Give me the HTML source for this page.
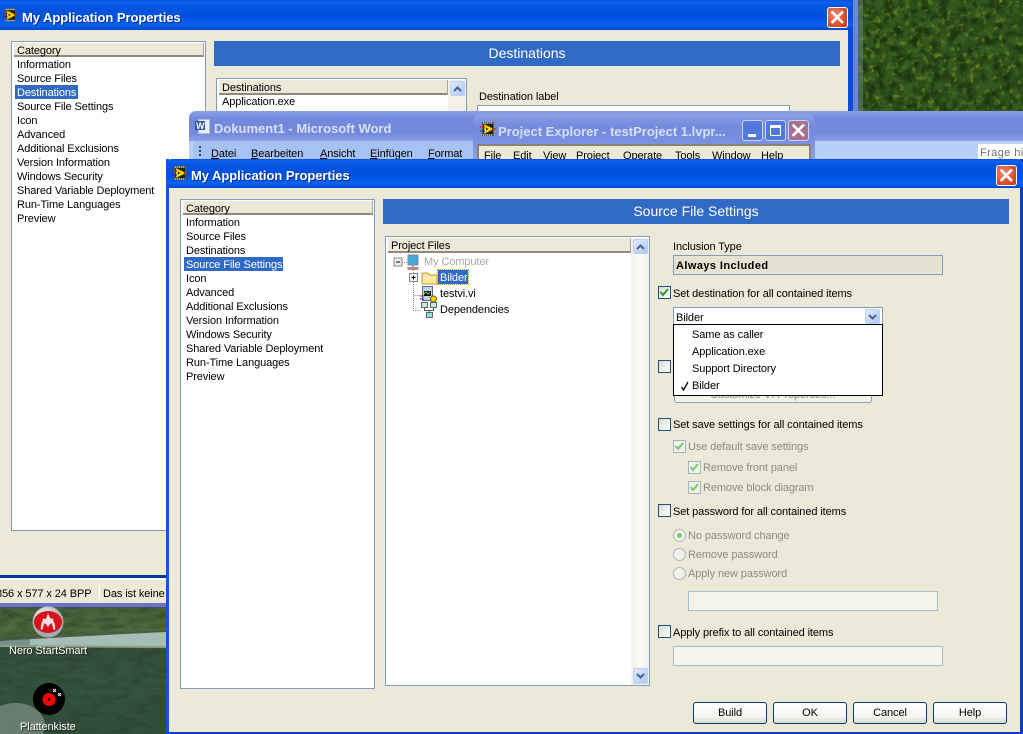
<!DOCTYPE html>
<html><head><meta charset="utf-8"><title>My Application Properties</title>
<style>
html,body{margin:0;padding:0}
body{width:1023px;height:734px;position:relative;overflow:hidden;background:#3b5a2c;font-family:"Liberation Sans",sans-serif;font-size:11px;color:#000}
div,span,svg{position:absolute;box-sizing:border-box}
.t{white-space:nowrap;line-height:14px;height:14px;letter-spacing:-.1px;margin-top:1px}
.g{color:#8c8c80}
.title{background:linear-gradient(#0a50d8 0,#0a62ee 8%,#0255e0 20%,#0050e0 55%,#0a62f0 85%,#0048c8 100%)}
.ttl{font-weight:bold;font-size:13px;color:#fff;white-space:nowrap;line-height:16px;text-shadow:1px 1px 0 #0a2f9a;letter-spacing:-.05px;margin-top:1px}
.ina{font-weight:bold;font-size:13px;color:#d5e0f6;white-space:nowrap;line-height:16px;letter-spacing:0;margin-top:1px}
.band{background:#316ac5;color:#fff;text-align:center;font-size:14px;line-height:25px;height:25px}
.box{background:#fff;border:1px solid #7f9db9}
.hd{background:#ece9d8;border-bottom:2px solid #8f8b7a;border-right:1px solid #aca899;height:15px;line-height:17px;padding-left:3px;letter-spacing:-.1px}
.x{border:1px solid #fff;border-radius:3px;background:radial-gradient(circle at 35% 35%,#e98a70,#d8512e 60%,#c23a1c);width:21px;height:21px}
.cb{width:13px;height:13px;border:1px solid #1c5180;background:linear-gradient(135deg,#dcdcd4,#fff)}
.cg{width:13px;height:13px;border:1px solid #a3b5bd;background:#f3f2ea}
.r{width:13px;height:13px;border:1px solid #a9b7bd;border-radius:50%;background:#f3f2ea}
.btn{width:74px;height:22px;top:702px;border:1px solid #003c74;border-radius:3px;background:linear-gradient(#fff,#f4f3ee 70%,#dcd8c8);text-align:center;line-height:20px;letter-spacing:-.1px}
.sb{background:linear-gradient(135deg,#e1eafe,#aec8f7);border:1px solid #bcd0f5;border-radius:2px}
.in{background:#f5f4ec;border:1px solid #a9bcc9}
u{text-decoration:underline}
</style></head><body>
<svg width="0" height="0" style="left:0;top:0"><defs>
<symbol id="lv" viewBox="0 0 16 14"><rect x="2" y="0" width="12" height="14" fill="#5f5f50"/><rect x="3" y="2" width="10" height="10" fill="#20201a"/><path d="M3 1h1M5 1h1M7 1h1M9 1h1M11 1h1M3 13h1M5 13h1M7 13h1M9 13h1M11 13h1" stroke="#e8e8e0" stroke-width="1"/><path d="M4 2 L14 7 L4 12Z" fill="#f2d800" stroke="#7a6c00" stroke-width=".5"/><path d="M0 5h5" stroke="#e01010"/><path d="M0 9h5" stroke="#1020d0"/><path d="M12 7h4" stroke="#e01010"/><path d="M6 5.500v3l2.200-1.500z" fill="#222"/></symbol>
<symbol id="xx" viewBox="0 0 21 21"><path d="M5.500 5.500 L15 15 M15 5.500 L5.500 15" stroke="#fff" stroke-width="2.600" stroke-linecap="square"/></symbol>
<symbol id="ck" viewBox="0 0 13 13"><path d="M2.500 6 L5 9 L10 3" fill="none" stroke="#21a121" stroke-width="2"/></symbol>
<symbol id="ckg" viewBox="0 0 13 13"><path d="M2.500 6 L5 9 L10 3" fill="none" stroke="#74c874" stroke-width="2"/></symbol>
<filter id="leaf" x="0" y="0" width="100%" height="100%" color-interpolation-filters="sRGB"><feTurbulence type="fractalNoise" baseFrequency=".11" numOctaves="3" seed="4"/><feColorMatrix values="0 0 0 0 .1  0 0 0 0 .2  0 0 0 0 .05  2.400 0 0 0 -.85"/></filter>
<filter id="leaf2" x="0" y="0" width="100%" height="100%" color-interpolation-filters="sRGB"><feTurbulence type="fractalNoise" baseFrequency=".17" numOctaves="3" seed="9"/><feColorMatrix values="0 0 0 0 .48  0 0 0 0 .56  0 0 0 0 .12  3 0 0 0 -1.700"/></filter>
<filter id="grass" x="0" y="0" width="100%" height="100%" color-interpolation-filters="sRGB"><feTurbulence type="fractalNoise" baseFrequency=".06 .18" numOctaves="3" seed="3"/><feColorMatrix values="0 0 0 0 .16  0 0 0 0 .24  0 0 0 0 .16  1.400 0 0 0 -.55"/></filter>
</defs></svg>

<!-- desktop top-right tree -->
<div style="left:858px;top:0;width:165px;height:112px;background:#33591f"></div>
<svg style="left:858px;top:0" width="165" height="112"><rect width="165" height="112" filter="url(#leaf)"/><rect width="165" height="112" filter="url(#leaf2)"/><rect x="0" y="0" width="5" height="112" fill="#6a8a80" opacity=".5"/></svg>

<!-- back window -->
<div style="left:0;top:0;width:853px;height:578px;background:#ece9d8;border-right:5px solid #0a4cd8;border-bottom:3px solid #0037a6"></div>
<div style="left:853px;top:0;width:5px;height:112px;background:#6f86d6"></div>
<div class="title" style="left:0;top:0;width:853px;height:30px;border-radius:0 6px 0 0"></div>
<svg style="left:3px;top:8px" width="15" height="14"><use href="#lv" width="15" height="14"/></svg>
<div class="ttl" style="left:22px;top:9px">My Application Properties</div>
<div class="x" style="left:827px;top:7px"><svg style="left:-1px;top:-1px" width="21" height="21"><use href="#xx"/></svg></div>

<div class="box" style="left:11px;top:41px;width:195px;height:490px"></div>
<div class="hd" style="left:14px;top:43px;width:190px;height:14px">Category</div>
<div class="t" style="left:17px;top:57px">Information</div>
<div class="t" style="left:17px;top:71px">Source Files</div>
<div style="left:15px;top:85px;width:63px;height:14px;background:#316ac5"></div>
<div class="t" style="left:17px;top:85px;color:#fff">Destinations</div>
<div class="t" style="left:17px;top:99px">Source File Settings</div>
<div class="t" style="left:17px;top:113px">Icon</div>
<div class="t" style="left:17px;top:127px">Advanced</div>
<div class="t" style="left:17px;top:141px">Additional Exclusions</div>
<div class="t" style="left:17px;top:155px">Version Information</div>
<div class="t" style="left:17px;top:169px">Windows Security</div>
<div class="t" style="left:17px;top:183px">Shared Variable Deployment</div>
<div class="t" style="left:17px;top:197px">Run-Time Languages</div>
<div class="t" style="left:17px;top:211px">Preview</div>

<div class="band" style="left:214px;top:41px;width:626px">Destinations</div>
<div class="box" style="left:216px;top:78px;width:251px;height:40px"></div>
<div class="hd" style="left:219px;top:80px;width:229px">Destinations</div>
<div class="t" style="left:222px;top:94px">Application.exe</div>
<div style="left:448px;top:80px;width:18px;height:35px;background:#f3f1ea"></div>
<div class="sb" style="left:450px;top:81px;width:15px;height:15px"><svg style="left:1px;top:2px" width="11" height="9"><path d="M2 7 L5.500 3.500 L9 7" fill="none" stroke="#4d6185" stroke-width="2"/></svg></div>
<div class="t" style="left:479px;top:89px">Destination label</div>
<div class="box" style="left:477px;top:105px;width:313px;height:14px"></div>

<!-- status strip -->
<div style="left:0;top:578px;width:167px;height:2px;background:#fff"></div>
<div style="left:0;top:580px;width:167px;height:23px;background:#ece9d8"></div>
<div style="left:0;top:603px;width:167px;height:4px;background:#6a72cf"></div>
<div style="left:99px;top:584px;width:1px;height:17px;background:#fff"></div>
<div class="t" style="left:-4px;top:586px">856 x 577 x 24 BPP</div>
<div class="t" style="left:103px;top:586px">Das ist keine</div>

<!-- desktop bottom-left -->
<div style="left:0;top:607px;width:167px;height:127px;background:linear-gradient(#47603a 0,#4d6a3c 18%,#33503a 34%,#34533d 60%,#2f4f3c 100%)"></div>
<svg style="left:0;top:607px" width="167" height="127"><rect width="167" height="127" filter="url(#grass)"/><path d="M30 31 L166 25 V39 L60 40 L30 38Z" fill="#a7bdb8"/><path d="M0 34 L30 32 V38 L0 39Z" fill="#77908a"/><path d="M0 33 L166 24" stroke="#4a5a46" stroke-width="1.500"/><path d="M0 39 L166 40" stroke="#90a088" stroke-width="2"/><ellipse cx="15" cy="118" rx="30" ry="22" fill="#8d9e98" opacity=".6"/></svg>
<svg style="left:32px;top:606px" width="32" height="32"><defs><radialGradient id="nb" cx=".4" cy=".3"><stop offset="0" stop-color="#fff"/><stop offset="1" stop-color="#a9a9b0"/></radialGradient></defs><circle cx="16" cy="16" r="15.500" fill="url(#nb)"/><ellipse cx="16" cy="16" rx="14" ry="11" fill="#d7121b"/><path d="M9 24 C8 18 11 16 11 12 C13 14 14 14 16 7 C18 13 20 14 21 12 C21 16 24 18 23 24 L21 23 C21 20 20 18 19 17 L16 21 L13 17 C12 18 11 20 11 23 Z" fill="#f6dede"/></svg>
<div class="t" style="left:9px;top:643px;color:#fff;text-shadow:1px 1px 1px #222">Nero StartSmart</div>
<svg style="left:33px;top:683px" width="32" height="32"><circle cx="16" cy="16" r="16" fill="#000"/><circle cx="16" cy="16.500" r="6.500" fill="#f00"/><circle cx="16" cy="16.500" r="1.200" fill="#000"/><path d="M20 6l3 3M23 6l-3 3M25 10l3 3M28 10l-3 3" stroke="#fff" stroke-width=".9"/></svg>
<div class="t" style="left:20px;top:719px;color:#fff;text-shadow:1px 1px 1px #222">Plattenkiste</div>

<!-- word window -->
<div style="left:189px;top:111px;width:834px;height:48px;background:#b9d0f6;border-radius:7px 0 0 0;overflow:hidden">
<div style="left:0;top:0;width:834px;height:30px;background:linear-gradient(#8a9fe6,#7289dd 25%,#7489dc 75%,#8ea2e8)"></div>
<div style="left:4px;top:30px;width:830px;height:18px;background:#b9d0f6"></div>
<div style="left:4px;top:30px;width:280px;height:18px;background:#a6c2f2"></div>
</div>
<svg style="left:195px;top:119px" width="16" height="16"><rect x="3" y="0" width="12" height="15" fill="#e8eefa" stroke="#7f8fb8"/><rect x="0" y="2" width="10" height="9" fill="#2f55a8"/><text x="1" y="10" font-size="9" font-weight="bold" fill="#fff" font-family="Liberation Sans">W</text></svg>
<div class="ina" style="left:214px;top:120px">Dokument1 - Microsoft Word</div>
<div style="left:199px;top:146px;width:2px;height:2px;background:#2a3f7a;box-shadow:0 4px #2a3f7a,0 8px #2a3f7a"></div>
<div class="t" style="left:211px;top:146px"><u>D</u>atei</div>
<div class="t" style="left:251px;top:146px"><u>B</u>earbeiten</div>
<div class="t" style="left:320px;top:146px"><u>A</u>nsicht</div>
<div class="t" style="left:370px;top:146px"><u>E</u>infügen</div>
<div class="t" style="left:428px;top:146px"><u>F</u>ormat</div>
<div style="left:978px;top:144px;width:45px;height:15px;background:#fff"></div>
<div class="t" style="left:980px;top:145px;color:#6f6f6f;letter-spacing:.4px">Frage hie</div>

<!-- project explorer -->
<div style="left:473px;top:114px;width:342px;height:45px;background:linear-gradient(#8a9fe6,#7289dd 30%,#7a90e0 60%,#8ea2e8);border-radius:7px 7px 0 0"></div>
<svg style="left:480px;top:122px" width="16" height="14"><use href="#lv" width="16" height="14"/></svg>
<div class="ina" style="left:498px;top:123px">Project Explorer - testProject 1.lvpr...</div>
<div style="left:742px;top:120px;width:21px;height:21px;border:1px solid #c9d5f5;border-radius:3px;background:#5277dd"><div style="left:5px;top:13px;width:8px;height:3px;background:#fff"></div></div>
<div style="left:765px;top:120px;width:21px;height:21px;border:1px solid #c9d5f5;border-radius:3px;background:#5277dd"><div style="left:4px;top:4px;width:11px;height:11px;border:1px solid #fff;border-top:3px solid #fff"></div></div>
<div style="left:788px;top:120px;width:21px;height:21px;border:1px solid #c9d5f5;border-radius:3px;background:#a8708f"><svg style="left:-1px;top:-1px" width="21" height="21"><use href="#xx"/></svg></div>
<div style="left:477px;top:144px;width:334px;height:15px;background:#ece9d8;border:2px solid #8b8570;border-bottom:0"></div>
<div class="t" style="left:484px;top:148px">File</div>
<div class="t" style="left:513px;top:148px">Edit</div>
<div class="t" style="left:543px;top:148px">View</div>
<div class="t" style="left:576px;top:148px">Project</div>
<div class="t" style="left:623px;top:148px">Operate</div>
<div class="t" style="left:675px;top:148px">Tools</div>
<div class="t" style="left:712px;top:148px">Window</div>
<div class="t" style="left:761px;top:148px">Help</div>

<!-- front window -->
<div style="left:166px;top:159px;width:857px;height:575px;background:#ece9d8;border-left:3px solid #0a55e5;border-right:3px solid #0a3fb8;border-bottom:2px solid #0a3fc0"></div>
<div class="title" style="left:166px;top:159px;width:857px;height:29px;border-radius:6px 6px 0 0"></div>
<svg style="left:172px;top:166px" width="16" height="14"><use href="#lv" width="16" height="14"/></svg>
<div class="ttl" style="left:191px;top:167px">My Application Properties</div>
<div class="x" style="left:996px;top:165px"><svg style="left:-1px;top:-1px" width="21" height="21"><use href="#xx"/></svg></div>

<div class="box" style="left:180px;top:199px;width:195px;height:490px"></div>
<div class="hd" style="left:183px;top:201px;width:190px;height:14px">Category</div>
<div class="t" style="left:186px;top:215px">Information</div>
<div class="t" style="left:186px;top:229px">Source Files</div>
<div class="t" style="left:186px;top:243px">Destinations</div>
<div style="left:184px;top:257px;width:99px;height:14px;background:#316ac5"></div>
<div class="t" style="left:186px;top:257px;color:#fff">Source File Settings</div>
<div class="t" style="left:186px;top:271px">Icon</div>
<div class="t" style="left:186px;top:285px">Advanced</div>
<div class="t" style="left:186px;top:299px">Additional Exclusions</div>
<div class="t" style="left:186px;top:313px">Version Information</div>
<div class="t" style="left:186px;top:327px">Windows Security</div>
<div class="t" style="left:186px;top:341px">Shared Variable Deployment</div>
<div class="t" style="left:186px;top:355px">Run-Time Languages</div>
<div class="t" style="left:186px;top:369px">Preview</div>

<div class="band" style="left:383px;top:199px;width:626px">Source File Settings</div>

<!-- tree panel -->
<div class="box" style="left:385px;top:236px;width:265px;height:450px"></div>
<div class="hd" style="left:388px;top:238px;width:243px;height:15px">Project Files</div>
<div style="left:631px;top:238px;width:18px;height:447px;background:linear-gradient(90deg,#f3f1ea,#fdfdfb 50%,#f1efe6)"></div>
<div class="sb" style="left:633px;top:239px;width:15px;height:15px"><svg style="left:1px;top:2px" width="11" height="9"><path d="M2 7 L5.500 3.500 L9 7" fill="none" stroke="#4d6185" stroke-width="2"/></svg></div>
<div class="sb" style="left:633px;top:668px;width:15px;height:16px"><svg style="left:1px;top:3px" width="11" height="9"><path d="M2 2 L5.500 5.500 L9 2" fill="none" stroke="#4d6185" stroke-width="2"/></svg></div>

<svg style="left:390px;top:254px" width="60" height="68" fill="none">
<path d="M23.500 14V56.500H31M23.500 41.500H31M12 8.500H18" stroke="#8a8a8a" stroke-dasharray="1 1"/>
<rect x="4" y="4" width="8" height="8" fill="#f0efe8" stroke="#808a90"/><path d="M6 8h4" stroke="#000"/>
<rect x="19.500" y="19.500" width="8" height="8" fill="#f4f3ec" stroke="#808a90"/><path d="M21.500 23.500h4M23.500 21.500v4" stroke="#000"/>
<rect x="18" y="1" width="10" height="10" fill="#4aa6d8" stroke="#7a8aa0"/><path d="M17 13h12l-1 3H18z" fill="#b88a80"/><path d="M22 11h2v2h-2z" fill="#9aa"/>
<path d="M32 30V19h6l2 2h7v9z" fill="#fde79a" stroke="#b89b3a"/><path d="M33 24h13" stroke="#fff4c8"/>
<rect x="32.500" y="32.500" width="10" height="14" fill="#c6d0ea" stroke="#5a6488"/><rect x="34" y="37" width="7" height="5" fill="#111"/><path d="M34 40l2-2 2 2 2-2" stroke="#4cd24c"/><circle cx="43.500" cy="45" r="3" fill="#f2d800" stroke="#6a5c00"/><path d="M30 42h4" stroke="#e01010"/><path d="M30 45h4" stroke="#1020d0"/>
<rect x="31.500" y="48.500" width="6" height="5" fill="#c9e6d6" stroke="#5a6a6a"/><rect x="40.500" y="48.500" width="6" height="5" fill="#c9e6d6" stroke="#5a6a6a"/><rect x="36.500" y="58.500" width="6" height="5" fill="#88e0e8" stroke="#5a6a6a"/><path d="M34.500 54v2.500h9V54M39 56v2" stroke="#555"/>
</svg>
<div class="t g" style="left:424px;top:254px;color:#a8a8a8">My Computer</div>
<div style="left:438px;top:270px;width:30px;height:14px;background:#316ac5;outline:1px dotted #c89a20"></div>
<div class="t" style="left:440px;top:270px;color:#fff">Bilder</div>
<div class="t" style="left:440px;top:286px">testvi.vi</div>
<div class="t" style="left:440px;top:302px">Dependencies</div>

<!-- right column -->
<div class="t" style="left:673px;top:239px">Inclusion Type</div>
<div style="left:673px;top:255px;width:270px;height:20px;background:#e6e3d2;border:1px solid #7f9db9"></div>
<div class="t" style="left:676px;top:258px;font-weight:bold;letter-spacing:.42px">Always Included</div>

<div class="cb" style="left:658px;top:286px"><svg style="left:-1px;top:-1px" width="13" height="13"><use href="#ck"/></svg></div>
<div class="t" style="left:673px;top:286px">Set destination for all contained items</div>

<div class="cb" style="left:658px;top:360px"></div>
<div style="left:674px;top:384px;width:198px;height:19px;background:#f2f1ea;border:1px solid #8ba3b8;border-radius:3px"></div>
<div class="t" style="left:710px;top:387px;color:#8c8c80">Customize VI Properties...</div>

<div class="box" style="left:673px;top:307px;width:210px;height:18px"></div>
<div class="t" style="left:676px;top:310px">Bilder</div>
<div class="sb" style="left:865px;top:309px;width:15px;height:15px"><svg style="left:1px;top:3px" width="11" height="9"><path d="M2 2 L5.500 5.500 L9 2" fill="none" stroke="#4d6185" stroke-width="2"/></svg></div>
<div style="left:673px;top:324px;width:210px;height:72px;background:#fff;border:1px solid #000"></div>
<div class="t" style="left:692px;top:327px">Same as caller</div>
<div class="t" style="left:692px;top:344px">Application.exe</div>
<div class="t" style="left:692px;top:361px">Support Directory</div>
<div class="t" style="left:692px;top:378px">Bilder</div>
<svg style="left:680px;top:380px" width="10" height="12"><path d="M1.500 7 L3.500 10 L8 2" fill="none" stroke="#000" stroke-width="1.300"/></svg>

<div class="cb" style="left:658px;top:418px"></div>
<div class="t" style="left:673px;top:417px">Set save settings for all contained items</div>
<div class="cg" style="left:673px;top:440px"><svg style="left:-1px;top:-1px" width="13" height="13"><use href="#ckg"/></svg></div>
<div class="t g" style="left:688px;top:439px">Use default save settings</div>
<div class="cg" style="left:688px;top:461px"><svg style="left:-1px;top:-1px" width="13" height="13"><use href="#ckg"/></svg></div>
<div class="t g" style="left:703px;top:460px">Remove front panel</div>
<div class="cg" style="left:688px;top:481px"><svg style="left:-1px;top:-1px" width="13" height="13"><use href="#ckg"/></svg></div>
<div class="t g" style="left:703px;top:480px">Remove block diagram</div>

<div class="cb" style="left:658px;top:504px"></div>
<div class="t" style="left:673px;top:504px">Set password for all contained items</div>
<div class="r" style="left:673px;top:529px"><div style="left:3px;top:3px;width:5px;height:5px;border-radius:50%;background:#7cc87c"></div></div>
<div class="t g" style="left:688px;top:528px">No password change</div>
<div class="r" style="left:673px;top:548px"></div>
<div class="t g" style="left:688px;top:547px">Remove password</div>
<div class="r" style="left:673px;top:567px"></div>
<div class="t g" style="left:688px;top:566px">Apply new password</div>
<div class="in" style="left:688px;top:591px;width:250px;height:20px"></div>

<div class="cb" style="left:658px;top:625px"></div>
<div class="t" style="left:673px;top:625px">Apply prefix to all contained items</div>
<div class="in" style="left:673px;top:646px;width:270px;height:20px"></div>

<div class="btn" style="left:693px">Build</div>
<div class="btn" style="left:773px">OK</div>
<div class="btn" style="left:853px">Cancel</div>
<div class="btn" style="left:933px">Help</div>
</body></html>
